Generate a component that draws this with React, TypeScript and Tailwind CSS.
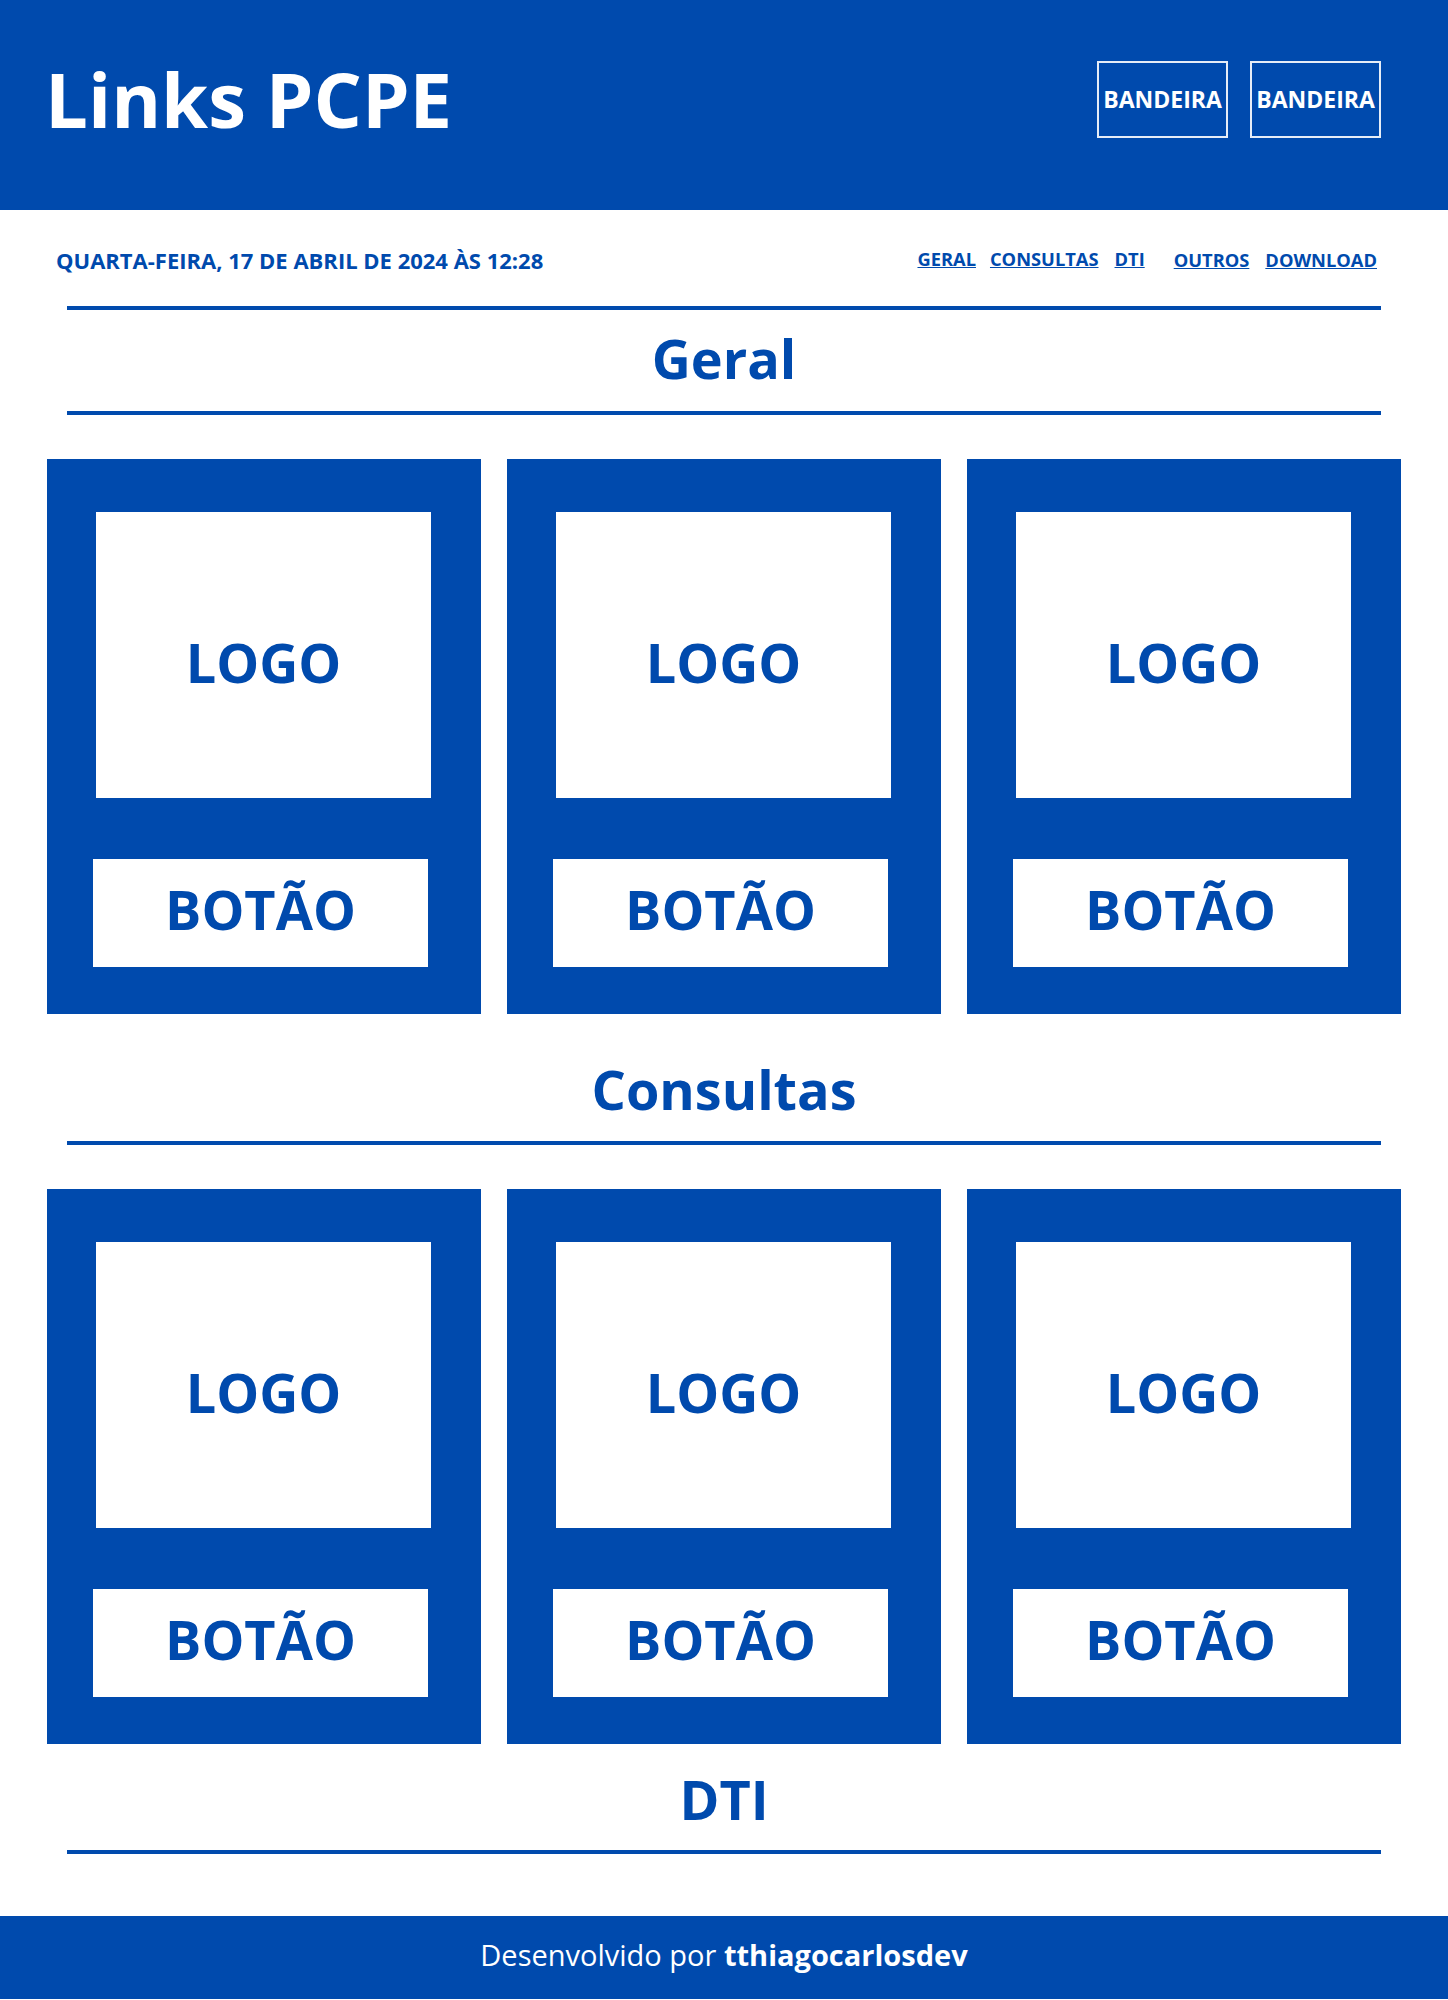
import React from 'react';

const sections = [
    { id: 'geral', title: 'Geral', topLine: true, cards: 3 },
    { id: 'consultas', title: 'Consultas', topLine: false, cards: 3 },
    { id: 'dti', title: 'DTI', topLine: false, cards: 0 },
];

function Card() {
    return (
        <div className="flex flex-col bg-[#004aad] pt-[53px] pb-[47px]">
            <div className="ml-[49px] flex h-[286px] w-[335px] items-center justify-center bg-white pt-[14px]">
                <span className="text-[54px] font-bold leading-none text-[#004aad]">LOGO</span>
            </div>
            <button
                type="button"
                className="ml-[46px] mt-[61px] flex h-[108px] w-[335px] items-center justify-center bg-white pb-[8px]"
            >
                <span className="text-[54px] font-bold leading-none text-[#004aad]">BOTÃO</span>
            </button>
        </div>
    );
}

export default function App() {
    return (
        <div className="min-h-[2000px] bg-white font-['Open_Sans',sans-serif] text-[#004aad]">
            {/* Cabeçalho */}
            <header className="flex h-[210px] items-center justify-between bg-[#004aad] pb-[12px] pl-[45px] pr-[67px]">
                <h1 className="text-[76px] font-bold leading-none text-white">Links PCPE</h1>
                <div className="flex gap-[22px]">
                    <div className="flex h-[77px] w-[131px] items-center justify-center border-2 border-white/90 text-[23px] font-bold text-white">
                        BANDEIRA
                    </div>
                    <div className="flex h-[77px] w-[131px] items-center justify-center border-2 border-white/90 text-[23px] font-bold text-white">
                        BANDEIRA
                    </div>
                </div>
            </header>

            {/* Data e navegação */}
            <div className="mt-[36px] flex h-[28px] items-center justify-between pl-[56px] pr-[71px]">
                <p className="text-[22px] font-bold leading-[28px]">QUARTA-FEIRA, 17 DE ABRIL DE 2024 ÀS 12:28</p>
                <nav className="flex items-center text-[18.3px] font-bold leading-[28px]">
                    <a href="#geral" className="-mt-[2px] underline">GERAL</a>
                    <a href="#consultas" className="-mt-[2px] ml-[14px] underline">CONSULTAS</a>
                    <a href="#dti" className="-mt-[2px] ml-[16px] underline">DTI</a>
                    <a href="#outros" className="ml-[29px] underline">OUTROS</a>
                    <a href="#download" className="ml-[16px] underline">DOWNLOAD</a>
                </nav>
            </div>

            <main className="pb-[62px]">
                {sections.map((s) => (
                    <section key={s.id} id={s.id}>
                        {s.topLine && <div className="mx-[67px] mt-[32px] h-[4px] bg-[#004aad]"></div>}
                        <h2
                            className={`text-center text-[54px] font-bold leading-none ${
                                s.id === 'geral' ? 'mt-[21px]' : s.id === 'consultas' ? 'mt-[48px]' : 'mt-[28px]'
                            }`}
                        >
                            {s.title}
                        </h2>
                        <div
                            className={`mx-[67px] h-[4px] bg-[#004aad] ${s.id === 'geral' ? 'mt-[26px]' : s.id === 'dti' ? 'mt-[24px]' : 'mt-[25px]'}`}
                        ></div>
                        {s.cards > 0 && (
                            <div className="mt-[44px] grid grid-cols-3 gap-[26px] px-[47px]">
                                {Array.from({ length: s.cards }).map((_, i) => (
                                    <Card key={i} />
                                ))}
                            </div>
                        )}
                    </section>
                ))}
            </main>

            {/* Rodapé */}
            <footer className="flex h-[83px] items-center justify-center bg-[#004aad] pb-[6px] text-[29px] text-white">
                <p>
                    Desenvolvido por <span className="font-bold">tthiagocarlosdev</span>
                </p>
            </footer>
        </div>
    );
}
